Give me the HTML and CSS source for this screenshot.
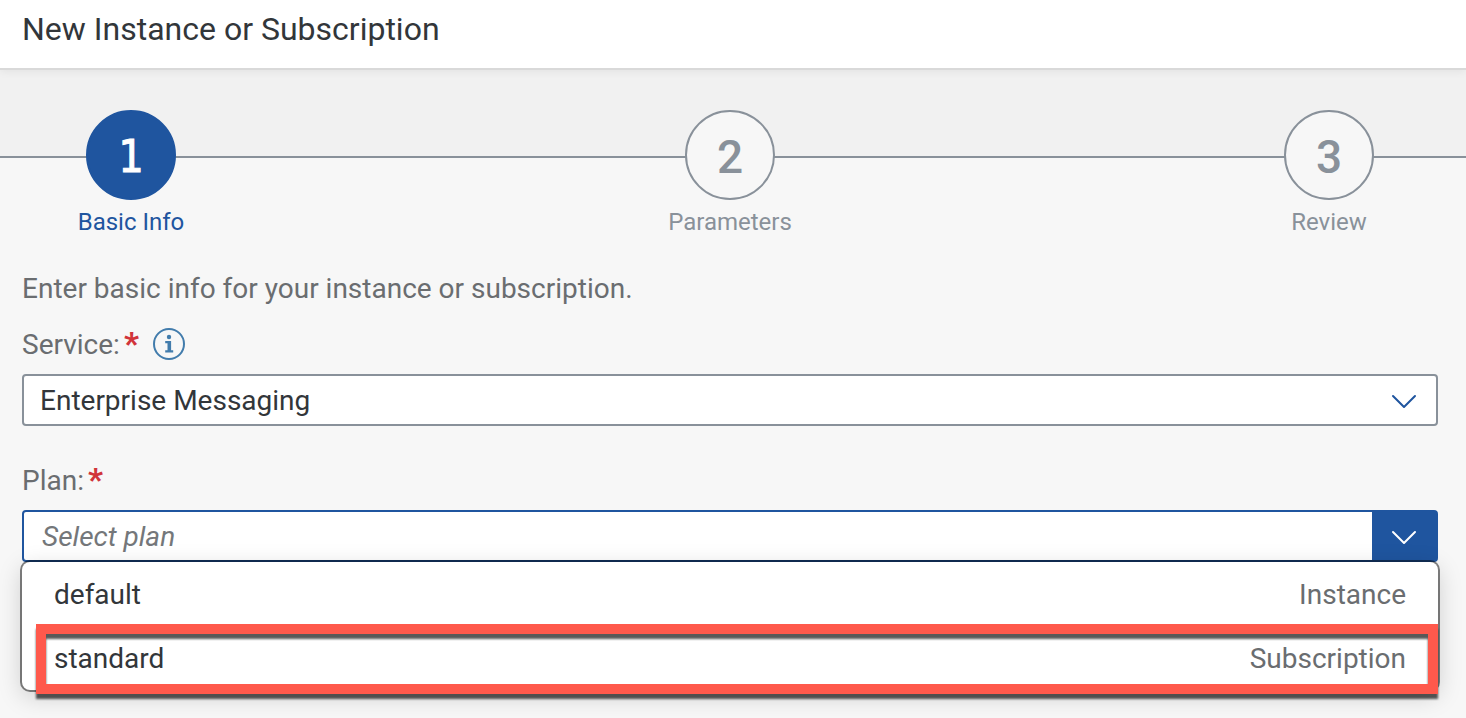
FILE: index.html
```html
<!DOCTYPE html>
<html lang="en">
<head>
<meta charset="utf-8">
<meta name="viewport" content="width=device-width, initial-scale=1">
<title>New Instance or Subscription</title>
<link rel="stylesheet" href="styles.css">
</head>
<body>
<header class="dialog-header">
  <h1 class="dialog-title">New Instance or Subscription</h1>
</header>
<nav class="wizard" aria-label="Wizard steps">
  <ol class="steps">
    <li><button type="button" class="step step-active" aria-current="step"><span class="step-number">1</span><span>Basic Info</span></button></li>
    <li><button type="button" class="step"><span class="step-number">2</span><span>Parameters</span></button></li>
    <li><button type="button" class="step"><span class="step-number">3</span><span>Review</span></button></li>
  </ol>
</nav>
<main>
  <form class="form">
    <p class="intro">Enter basic info for your instance or subscription.</p>
    <div class="label-row">
      <label for="service">Service:<span class="required">*</span></label>
      <button type="button" class="info" aria-label="Service information">
        <svg width="34" height="34" viewBox="0 0 34 34" aria-hidden="true"><circle cx="17" cy="17" r="15" fill="none" stroke="currentColor" stroke-width="2"/><circle cx="17" cy="10" r="2.2" fill="currentColor"/><path d="M13.2 14h5.9v9.2h2.1v2.2h-8v-2.2h2.3v-7h-2.3z" fill="currentColor"/></svg>
      </button>
    </div>
    <div class="select-field">
      <select id="service" class="service-select"><option>Enterprise Messaging</option></select>
      <svg class="chevron" width="26" height="16" viewBox="0 0 26 16" aria-hidden="true"><path d="M2 3l11 11L24 3" fill="none" stroke="currentColor" stroke-width="2" stroke-linecap="round" stroke-linejoin="round"/></svg>
    </div>
    <div class="label-row plan-label">
      <label for="plan">Plan:<span class="required">*</span></label>
    </div>
    <div class="combo">
      <input id="plan" class="combo-input" type="text" placeholder="Select plan" role="combobox" aria-expanded="true" aria-controls="plans">
      <button type="button" class="combo-button" aria-label="Show plans">
        <svg width="26" height="16" viewBox="0 0 26 16" aria-hidden="true"><path d="M2 3l11 11L24 3" fill="none" stroke="currentColor" stroke-width="2" stroke-linecap="round" stroke-linejoin="round"/></svg>
      </button>
      <ul id="plans" class="menu" role="listbox">
        <li class="menu-item" role="option"><span>default</span><span class="kind">Instance</span></li>
        <li class="menu-item highlighted" role="option"><span>standard</span><span class="kind">Subscription</span></li>
      </ul>
    </div>
  </form>
</main>
</body>
</html>
```
FILE: styles.css
```css
* {
  box-sizing: border-box;
}

body {
  min-height: 100vh;
  margin: 0;
  background: #f7f7f7;
  color: #32363a;
  font: 28px/36px Roboto, "Noto Sans", sans-serif;
}

button,
input,
select {
  font: inherit;
}

.dialog-header {
  position: relative;
  padding: 10px 22px 20px;
  background: #fff;
  border-bottom: 2px solid #d9d9d9;
  box-shadow: 0 2px 8px rgba(0, 0, 0, 0.06);
}

.dialog-title {
  margin: 0;
  font-size: 32px;
  line-height: 38px;
  font-weight: 400;
}

.wizard {
  padding: 40px 77px 0 71px;
  background: linear-gradient(#f1f1f1 86px, #89919a 86px, #89919a 88px, #f7f7f7 88px);
}

.steps {
  display: flex;
  justify-content: space-between;
  margin: 0;
  padding: 0;
  list-style: none;
}

.step {
  display: flex;
  flex-direction: column;
  align-items: center;
  gap: 6px;
  width: 120px;
  padding: 0;
  border: 0;
  background: none;
  color: #89919a;
  font-size: 24px;
  line-height: 32px;
}

.step-number {
  width: 90px;
  height: 90px;
  border: 2px solid #89919a;
  border-radius: 50%;
  background: #f7f7f7;
  font: 500 46px/90px Roboto, sans-serif;
}

.step-active {
  color: #1f559f;
}

.step-active .step-number {
  border-color: #1f559f;
  background: #1f559f;
  color: #fff;
  font: 400 44px/90px "DejaVu Sans Condensed", "DejaVu Sans", sans-serif;
  -webkit-text-stroke: 1px #fff;
}

.form {
  padding: 33px 28px 156px 22px;
}

.intro {
  margin: 0 0 17px;
  color: #6a6d70;
}

.label-row {
  display: flex;
  align-items: center;
  gap: 13px;
  height: 40px;
  margin-bottom: 10px;
  color: #6a6d70;
}

.plan-label {
  margin-top: 34px;
}

.required {
  margin-left: 4px;
  color: #d1343a;
  font-size: 32px;
  font-weight: 900;
}

.info {
  display: flex;
  padding: 0;
  border: 0;
  background: none;
  color: #427cac;
}

.select-field {
  display: grid;
  align-items: center;
}

.service-select,
.chevron {
  grid-area: 1 / 1;
}

.service-select {
  width: 100%;
  height: 52px;
  padding: 2px 64px 0 16px;
  border: 2px solid #89919a;
  border-radius: 4px;
  appearance: none;
  background: #fff;
  color: #32363a;
}

.chevron {
  justify-self: end;
  margin: 2px 21px 0 0;
  color: #1f559f;
  pointer-events: none;
}

.combo {
  position: relative;
  display: flex;
  height: 52px;
  border: 2px solid #1f559f;
  border-radius: 4px;
  background: #fff;
}

.combo-input {
  flex: 1;
  min-width: 0;
  padding: 2px 18px 0;
  border: 0;
  outline: 0;
  background: none;
  color: #32363a;
}

.combo-input::placeholder {
  color: #74777a;
  font-style: italic;
}

.combo-button {
  display: flex;
  align-items: center;
  justify-content: center;
  width: 64px;
  padding: 2px 0 0;
  border: 0;
  background: #1f559f;
  color: #fff;
}

.menu {
  position: absolute;
  top: calc(100% + 2px);
  left: -2px;
  right: -2px;
  margin: 0;
  padding: 0;
  border-radius: 8px;
  background: #fff;
  box-shadow: 0 0 0 2px rgba(0, 0, 0, 0.48), 0 6px 24px rgba(0, 0, 0, 0.18);
  list-style: none;
}

.menu-item {
  position: relative;
  display: flex;
  align-items: center;
  justify-content: space-between;
  height: 64px;
  padding: 2px 32px 0;
}

.kind {
  color: #6a6d70;
}

.highlighted::after {
  content: "";
  position: absolute;
  inset: -2px 0 -4px 14px;
  border: 10px solid #ff594c;
  filter: drop-shadow(0 5px 1px rgba(0, 0, 0, 0.65));
  pointer-events: none;
}
```
